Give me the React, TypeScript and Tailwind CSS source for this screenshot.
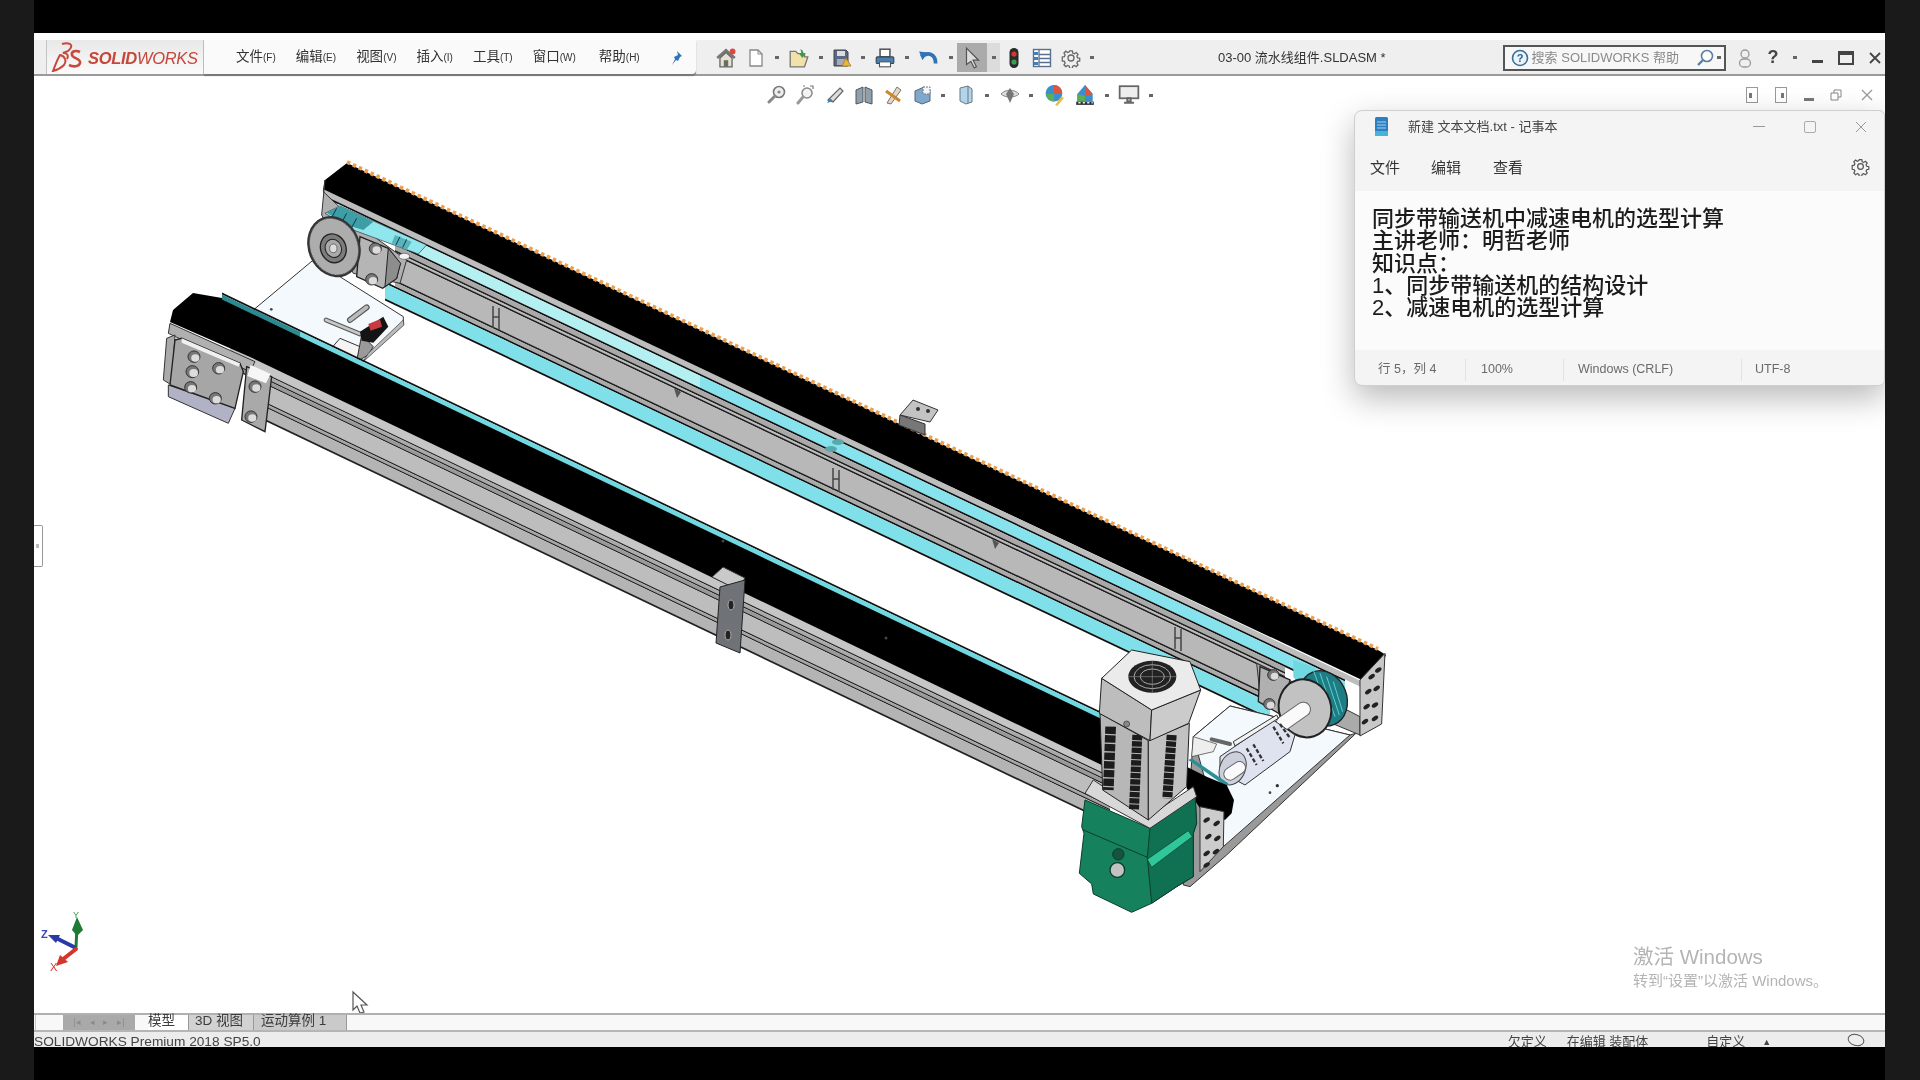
import type { ReactNode } from 'react';

// slanted strip running along the conveyor: y values are taken at refX
const band = (x0: number, x1: number, top: number, bot: number, refX: number, slope = 0.474) => {
  const at = (x: number, y: number) => `${x},${(y + (x - refX) * slope).toFixed(1)}`;
  return `${at(x0, top)} ${at(x1, top)} ${at(x1, bot)} ${at(x0, bot)}`;
};

const Far = ({ x0, x1, top, bot, fill }: { x0: number; x1: number; top: number; bot: number; fill: string }) => (
  <polygon points={band(x0, x1, top, bot, 880)} fill={fill} />
);

const Near = ({ x0 = 262, x1 = 1110, top, bot, fill }: { x0?: number; x1?: number; top: number; bot: number; fill: string }) => (
  <polygon points={band(x0, x1, top, bot, 680, 0.477)} fill={fill} />
);

function Hole({ x, y, r = 18 }: { x: number; y: number; r?: number }) {
  return (
    <g>
      <ellipse cx={x} cy={y} rx={r} ry={r * 0.95} fill="#777" stroke="#333" strokeWidth="3" />
      <ellipse cx={x + 4} cy={y + 4} rx={r * 0.68} ry={r * 0.62} fill="#dcdcdc" />
    </g>
  );
}

function Speckle({ pts }: { pts: number[][] }) {
  return (
    <g fill="#222">
      {pts.map(([x, y], i) => (
        <ellipse key={i} cx={x} cy={y} rx="11" ry="6" transform={`rotate(-35 ${x} ${y})`} />
      ))}
    </g>
  );
}

function Conveyor() {
  return (
    <svg className="absolute inset-0 h-full w-full" viewBox="34 76 1851 937">
      {/* far belt */}
      <polygon points="347,163 1378,650 1386,655 1380,668 1362,680 323,192 325,180" fill="#000" />
      <line x1="347" y1="162" x2="1378" y2="649" stroke="#e9a050" strokeWidth="4" strokeDasharray="3.5 3" />
      <Far x0={323} x1={1362} top={453} bot={459} fill="#bdbdbd" />
      <Far x0={323} x1={1345} top={459} bot={461} fill="#111" />
      <Far x0={338} x1={700} top={461} bot={473} fill="#b4f0f2" />
      <Far x0={700} x1={1345} top={461} bot={473} fill="#86e2ec" />
      <Far x0={338} x1={1345} top={473} bot={475} fill="#111" />
      <Far x0={395} x1={1285} top={475} bot={480} fill="#a9a9a9" />
      <Far x0={395} x1={1285} top={480} bot={482} fill="#222" />
      <Far x0={395} x1={1285} top={482} bot={484} fill="#bbb" />
      <Far x0={395} x1={1285} top={484} bot={486} fill="#222" />
      <Far x0={395} x1={1285} top={486} bot={510} fill="#b8b8b8" />
      <Far x0={395} x1={1285} top={510} bot={512} fill="#222" />
      <Far x0={395} x1={1285} top={512} bot={516} fill="#aaa" />
      <Far x0={385} x1={1285} top={516} bot={518} fill="#111" />
      <Far x0={385} x1={1270} top={518} bot={533} fill="#7fe0ea" />
      <Far x0={385} x1={1270} top={533} bot={535} fill="#111" />
      {/* rail notches */}
      {[
        [496, 316],
        [836, 478],
        [1178, 637],
      ].map(([x, y]) => (
        <g key={x} stroke="#444" strokeWidth="1.5" fill="none">
          <path d={`M${x - 3} ${y - 10}v22M${x + 3} ${y - 8}v22M${x - 3} ${y + 1}h6`} />
        </g>
      ))}
      {[
        [677, 392],
        [995, 543],
      ].map(([x, y]) => (
        <polygon key={x} points={`${x - 3},${y - 4} ${x + 4},${y} ${x},${y + 6}`} fill="#555" />
      ))}
      <ellipse cx="831" cy="449" rx="6" ry="3" fill="#5aa8ae" />
      <ellipse cx="838" cy="442" rx="6" ry="3" fill="#5aa8ae" />
      {/* upper bracket */}
      <polygon points="900,415 913,400 938,410 930,422" fill="#c3c3c3" stroke="#333" />
      <polygon points="900,415 899,425 925,435 925,424" fill="#777" stroke="#333" />
      <ellipse cx="918" cy="409" rx="2" ry="2" fill="#333" />
      <ellipse cx="928" cy="411" rx="2" ry="2" fill="#333" />

      {/* left end, coordinates as read off the crop */}
      <g transform="translate(140 150) scale(0.3333)">
        <polygon points="520,330 790,500 790,525 660,640 340,480" fill="#f4f9fd" stroke="#333" strokeWidth="3" />
        <circle cx="394" cy="478" r="4" fill="#444" />
        <line x1="630" y1="510" x2="680" y2="472" stroke="#555" strokeWidth="18" strokeLinecap="round" />
        <line x1="630" y1="510" x2="680" y2="472" stroke="#bbb" strokeWidth="11" strokeLinecap="round" />
        <line x1="558" y1="510" x2="660" y2="552" stroke="#555" strokeWidth="14" strokeLinecap="round" />
        <line x1="558" y1="510" x2="660" y2="552" stroke="#c8c8c8" strokeWidth="8" strokeLinecap="round" />
        <polygon points="570,600 600,565 660,590 650,635" fill="#f4f4f4" stroke="#333" strokeWidth="3" />
        <polygon points="650,635 665,555 700,590 685,615" fill="#9a9a9a" stroke="#333" strokeWidth="3" />
        <polygon points="685,610 790,510 792,525 670,635" fill="#bbb" stroke="#333" strokeWidth="2" />
        <polygon points="660,545 730,500 745,530 700,578 665,572" fill="#141414" />
        <polygon points="685,522 720,508 726,530 692,542" fill="#c83a42" />
        {/* far pulley */}
        <polygon points="550,125 555,90 545,195 640,370 780,400 800,330 660,230" fill="#b0b0b0" stroke="#333" strokeWidth="3" />
        <polygon points="555,190 600,168 860,285 835,312 640,240" fill="#8fe6ec" stroke="#333" strokeWidth="2" />
        <polygon points="560,188 600,168 700,215 670,240 620,225" fill="#3d9ea6" />
        <polygon points="765,255 815,275 800,300 755,280" fill="#58b3bb" />
        <path d="M590 175l-15 28M620 190l-15 28M650 205l-15 28M780 260l-12 25M800 268l-12 25" stroke="#135" strokeWidth="3" />
        <polygon points="660,260 745,295 780,340 770,385 728,415 650,380" fill="#b5b5b5" stroke="#222" strokeWidth="4" />
        <polygon points="745,295 782,340 770,385 735,410" fill="#8d8d8d" stroke="#222" strokeWidth="3" />
        <Hole x={706} y={296} />
        <Hole x={695} y={388} />
        <ellipse cx="793" cy="319" rx="16" ry="9" fill="#f4f4f4" stroke="#555" strokeWidth="2" />
        <ellipse cx="582" cy="290" rx="78" ry="94" transform="rotate(-22 582 290)" fill="#333" />
        <ellipse cx="582" cy="290" rx="71" ry="87" transform="rotate(-22 582 290)" fill="#adadad" stroke="#555" strokeWidth="3" strokeDasharray="4 3" />
        <ellipse cx="580" cy="295" rx="38" ry="44" transform="rotate(-22 580 295)" fill="#7c7c7c" stroke="#222" strokeWidth="4" />
        <ellipse cx="580" cy="295" rx="24" ry="28" transform="rotate(-22 580 295)" fill="#aaa" stroke="#222" strokeWidth="3" />
        <ellipse cx="580" cy="295" rx="11" ry="13" fill="#ddd" stroke="#444" strokeWidth="2" />
      </g>

      {/* near rail */}
      <Near x0={230} top={562} bot={571} fill="#c6c6c6" />
      <Near x0={230} top={571} bot={572.5} fill="#222" />
      <Near x0={240} top={572.5} bot={576} fill="#aaa" />
      <Near x0={240} top={576} bot={577.5} fill="#222" />
      <Near x0={240} top={577.5} bot={581} fill="#999" />
      <Near x0={240} top={581} bot={582.5} fill="#222" />
      <Near top={582.5} bot={600} fill="#bdbdbd" />
      <Near top={600} bot={601.5} fill="#222" />
      <Near top={601.5} bot={604} fill="#a5a5a5" />
      <Near top={604} bot={605.5} fill="#222" />
      <Near top={605.5} bot={617} fill="#b4b4b4" />
      <Near top={617} bot={619} fill="#222" />
      {/* near belt */}
      <polygon points="193,293 222,298 1110,721 1110,769 680,562 250,357 170,322 173,310" fill="#000" />
      <Near x0={222} top={511} bot={513} fill="#111" />
      <Near x0={222} x1={300} top={513} bot={518} fill="#2b8a90" />
      <Near x0={300} top={513} bot={518} fill="#6fd8e0" />
      <ellipse cx="723" cy="541" rx="1.5" ry="1.5" fill="#444" />
      <ellipse cx="886" cy="638" rx="1.5" ry="1.5" fill="#444" />
      {/* bracket on the near rail */}
      <polygon points="712,577 723,567 745,578 738,590" fill="#c9c9c9" stroke="#333" />
      <polygon points="720,587 745,580 740,653 716,643" fill="#6f7378" stroke="#222" />
      <ellipse cx="731" cy="605" rx="3" ry="5" fill="#222" stroke="#aaa" />
      <ellipse cx="728" cy="635" rx="3" ry="5" fill="#222" stroke="#aaa" />

      {/* left end block of the near rail */}
      <g transform="translate(140 150) scale(0.3333)">
        <polygon points="90,520 345,635 330,665 85,550" fill="#b0b0b0" stroke="#333" strokeWidth="3" />
        <polygon points="80,565 105,555 95,705 70,690" fill="#aaa" stroke="#333" strokeWidth="3" />
        <polygon points="85,705 285,775 265,820 85,740" fill="#b2b2c6" stroke="#333" strokeWidth="3" />
        <polygon points="105,570 125,565 300,640 310,665 285,775 90,705" fill="#a6a6a6" stroke="#222" strokeWidth="4" />
        <polygon points="125,565 300,640 296,650 125,578" fill="#f0f0f0" />
        <Hole x={162} y={620} />
        <Hole x={157} y={665} r={19} />
        <Hole x={236} y={655} />
        <Hole x={152} y={712} />
        <Hole x={226} y={745} />
        <polygon points="320,650 395,680 375,845 305,810" fill="#a9a9a9" stroke="#222" strokeWidth="4" />
        <polygon points="332,645 392,672 378,700 322,678" fill="#f6f6f6" />
        <Hole x={345} y={710} />
        <Hole x={333} y={800} />
      </g>

      {/* right end with the motor */}
      <g transform="translate(1060 620) scale(0.3333)">
        <polygon points="400,350 510,258 870,345 888,340 500,705 390,800 370,795" fill="#9a9a9a" stroke="#333" strokeWidth="3" />
        <polygon points="400,350 510,258 870,345 490,680" fill="#f4f9fd" stroke="#333" strokeWidth="3" />
        <circle cx="652" cy="497" r="5" fill="#333" />
        <circle cx="630" cy="518" r="4" fill="#444" />
        <polygon points="590,130 900,290 900,345 835,318 600,220" fill="#aaa" stroke="#333" strokeWidth="3" />
        <polygon points="900,180 975,100 965,312 900,348" fill="#c8c8c8" stroke="#333" strokeWidth="3" />
        <Speckle pts={[[935, 170], [955, 150], [925, 215], [950, 205], [920, 260], [945, 255], [915, 305], [945, 295]]} />
        <polygon points="700,120 760,140 840,250 800,300 700,170" fill="#6fd8e0" />
        <ellipse cx="790" cy="235" rx="70" ry="85" transform="rotate(-22 790 235)" fill="#1c7d85" stroke="#222" strokeWidth="4" />
        <path d="M760 150l50 140M780 160l45 130M800 170l38 115M820 185l28 90" stroke="#6cc" strokeWidth="3" />
        <polygon points="600,140 690,180 665,285 595,245" fill="#b0b0b0" stroke="#222" strokeWidth="4" />
        <Hole x={640} y={165} r={17} />
        <Hole x={628} y={252} r={17} />
        <ellipse cx="735" cy="265" rx="78" ry="88" transform="rotate(-18 735 265)" fill="#c2c2c2" stroke="#222" strokeWidth="6" />
        <line x1="670" y1="310" x2="730" y2="268" stroke="#666" strokeWidth="46" strokeLinecap="round" />
        <line x1="670" y1="310" x2="730" y2="268" stroke="#fafafa" strokeWidth="40" strokeLinecap="round" />
        <polygon points="480,410 640,300 705,345 690,395 555,495 480,455" fill="#dfe3ef" stroke="#333" strokeWidth="3" />
        <polygon points="520,365 650,285 655,295 525,378" fill="#f2f2f2" stroke="#333" strokeWidth="3" />
        <ellipse cx="518" cy="445" rx="38" ry="52" transform="rotate(25 518 445)" fill="#ccd0dd" stroke="#444" strokeWidth="3" />
        <line x1="510" y1="462" x2="538" y2="443" stroke="#666" strokeWidth="40" strokeLinecap="round" />
        <line x1="510" y1="462" x2="538" y2="443" stroke="#fafafa" strokeWidth="34" strokeLinecap="round" />
        <path d="M560 385l30 50M580 373l30 50M640 320l30 50M660 312l30 42" stroke="#333" strokeWidth="7" strokeDasharray="12 6" />
        <polygon points="400,350 470,372 460,395 395,410" fill="#eee" stroke="#333" strokeWidth="2" />
        <line x1="455" y1="358" x2="510" y2="372" stroke="#666" strokeWidth="12" strokeLinecap="round" />
        <polygon points="385,420 395,415 505,490 500,500" fill="#2e8e96" />
        <polygon points="380,440 440,470 500,495 522,540 515,580 495,600 420,565 380,505" fill="#000" />
        <polygon points="420,560 492,575 490,680 420,755" fill="#ccc" stroke="#333" strokeWidth="3" />
        <Speckle pts={[[440, 600], [470, 610], [445, 650], [472, 655], [440, 700], [468, 695], [440, 735]]} />

        <polygon points="65,620 75,540 270,625 405,520 410,610 400,640 400,770 350,800 275,850 215,877 100,822 95,792 58,760 72,640" fill="#15825d" stroke="#0c3c2c" strokeWidth="3" />
        <polygon points="270,625 405,520 410,610 400,640 400,770 350,800 275,850 262,712" fill="#107052" stroke="#0c3c2c" strokeWidth="3" />
        <path d="M70 630L262 712" stroke="#0c3c2c" strokeWidth="3" />
        <polygon points="262,718 385,632 397,650 275,742" fill="#2fc79a" stroke="#0c3c2c" strokeWidth="2" />
        <circle cx="175" cy="703" r="17" fill="#15543f" stroke="#0c3c2c" strokeWidth="3" />
        <circle cx="172" cy="750" r="22" fill="#c2c2c2" stroke="#0c3c2c" strokeWidth="4" />

        <polygon points="75,520 100,480 265,590 400,500 410,530 270,625" fill="#d8d8d8" stroke="#333" strokeWidth="3" />
        <polygon points="120,280 128,510 265,600 265,362" fill="#b7b7b7" stroke="#222" strokeWidth="3" />
        <polygon points="265,362 388,310 380,500 265,600" fill="#c2c2c2" stroke="#222" strokeWidth="3" />
        <line x1="152" y1="320" x2="145" y2="510" stroke="#1c1c1c" strokeWidth="32" strokeDasharray="22 4" />
        <line x1="232" y1="345" x2="222" y2="568" stroke="#1c1c1c" strokeWidth="30" strokeDasharray="16 3" />
        <line x1="335" y1="345" x2="322" y2="535" stroke="#1c1c1c" strokeWidth="30" strokeDasharray="16 3" />
        <polygon points="125,175 118,280 270,362 275,270" fill="#bdbdbd" stroke="#222" strokeWidth="3" />
        <polygon points="275,270 270,362 386,310 422,210" fill="#cbcbcb" stroke="#222" strokeWidth="3" />
        <polygon points="125,175 215,90 390,125 422,210 275,270" fill="#ebebeb" stroke="#222" strokeWidth="3" />
        <ellipse cx="277" cy="170" rx="72" ry="48" fill="#222" />
        <ellipse cx="277" cy="170" rx="55" ry="36" fill="none" stroke="#aaa" strokeWidth="3" />
        <ellipse cx="277" cy="170" rx="36" ry="23" fill="none" stroke="#aaa" strokeWidth="3" />
        <path d="M277 122v96M205 170h144" stroke="#888" strokeWidth="2" />
        <circle cx="200" cy="312" r="9" fill="#888" stroke="#333" strokeWidth="2" />
      </g>

      {/* axis triad */}
      <g strokeLinecap="round">
        <line x1="76" y1="947" x2="77" y2="926" stroke="#1f7a35" strokeWidth="3" />
        <polygon points="77,917 83,930 77,936 72,930" fill="#1f7a35" />
        <line x1="74" y1="947" x2="56" y2="938" stroke="#2a3aa8" strokeWidth="4" />
        <polygon points="48,935 60,935 56,943" fill="#2a3aa8" />
        <line x1="76" y1="949" x2="62" y2="960" stroke="#d8352a" strokeWidth="4" />
        <polygon points="56,966 60,955 68,962" fill="#d8352a" />
      </g>
      <text x="41" y="938" fontSize="11" fontWeight="700" fill="#3b46b8" fontFamily="Liberation Sans">Z</text>
      <text x="50" y="971" fontSize="11" fill="#d8352a" fontFamily="Liberation Sans">X</text>
      <text x="73" y="918" fontSize="9" fill="#3a9a52" fontFamily="Liberation Sans">Y</text>
      {/* mouse pointer */}
      <polygon points="353,992 367,1005 361,1005 364,1012 360,1013 357,1006 353,1010" fill="#fff" stroke="#555" strokeWidth="1.2" />
    </svg>
  );
}

const Caret = () => <span className="inline-block h-[3px] w-[4px] shrink-0 bg-[#666] align-middle" />;

function Ico({ children, w = 20, h = 20 }: { children: ReactNode; w?: number; h?: number }) {
  return (
    <svg width={w} height={h} viewBox="0 0 20 20" className="shrink-0">
      {children}
    </svg>
  );
}

const Home = () => (
  <Ico w={22} h={22}>
    <path d="M2 10l8-7 8 7" fill="none" stroke="#777" strokeWidth="2.4" />
    <path d="M4.5 10v8h11v-8L10 5z" fill="#e8e2d0" stroke="#666" strokeWidth="1.2" />
    <rect x="8" y="12" width="4" height="6" fill="#6b6b6b" />
    <circle cx="16" cy="4" r="2.6" fill="#e0483c" />
  </Ico>
);
const Doc = () => (
  <Ico w={20} h={22}>
    <path d="M4 2h8l4 4v12H4z" fill="#fff" stroke="#888" strokeWidth="1.3" />
    <path d="M12 2v4h4" fill="none" stroke="#888" />
  </Ico>
);
const Folder = () => (
  <Ico w={22} h={22}>
    <path d="M2 4h5l2 2h6v3h3l-3 9H2z" fill="#f0e2a8" stroke="#777" strokeWidth="1.2" />
    <path d="M11 2c2 0 3 2 3 4h2l-3 4-3-4h2c0-1 0-3-1-4z" fill="#3b9a4a" />
  </Ico>
);
const Save = () => (
  <Ico w={20} h={22}>
    <path d="M2 2h12l2 2v14H2z" fill="#5a6a86" stroke="#444" />
    <rect x="5" y="3" width="8" height="5" fill="#ddd" />
    <rect x="5" y="11" width="8" height="6" fill="#aab" />
    <path d="M14 10l5 8h-9z" fill="#e8b83a" stroke="#a07a20" strokeWidth="0.8" />
  </Ico>
);
const Print = () => (
  <Ico w={22} h={22}>
    <rect x="5.5" y="2" width="9" height="7" fill="#fff" stroke="#555" strokeWidth="1.4" />
    <rect x="2" y="9" width="16" height="6" rx="1" fill="#4a7fb0" stroke="#345" />
    <rect x="5" y="13.5" width="10" height="4.5" fill="#fff" stroke="#555" />
  </Ico>
);
const Undo = () => (
  <Ico w={22} h={22}>
    <path d="M3 9c6-5 13-3 13 6" fill="none" stroke="#2f74b8" strokeWidth="3.4" />
    <path d="M1 4l8 1-5 7z" fill="#2f74b8" />
  </Ico>
);
const Arrow = () => (
  <Ico w={22} h={24}>
    <path d="M5 1v15l4-3 3 6 2-1-3-6h5z" fill="#ddd" stroke="#555" strokeWidth="1.1" />
  </Ico>
);
const Light = () => (
  <svg width="10" height="22" viewBox="0 0 10 22" className="shrink-0">
    <rect x="0.5" y="1" width="9" height="20" rx="4.5" fill="#2a2a2a" />
    <circle cx="5" cy="7" r="2.6" fill="#d03a30" />
    <circle cx="5" cy="15" r="2.6" fill="#3aa050" />
  </svg>
);
const List = () => (
  <Ico w={20} h={20}>
    <rect x="1.5" y="1.5" width="17" height="17" fill="#fff" stroke="#5a7090" strokeWidth="1.4" />
    <path d="M7 1.5v17M7 6.5h11M7 10.5h11M7 14.5h11" stroke="#5a7090" strokeWidth="1.3" />
    <path d="M2 4h4v3H2zM2 9h4v3H2zM2 14h4v3H2z" fill="#3f80b8" />
  </Ico>
);
const Gear = ({ c = '#666', s = 20 }: { c?: string; s?: number }) => (
  <Ico w={s} h={s}>
    <path
      d="M8.4 1.5h3.2l.5 2.6 1.9.8 2.2-1.5 2.2 2.3-1.4 2.1.8 2 2.6.5v3.2l-2.6.5-.8 1.9 1.4 2.2-2.2 2.2-2.2-1.4-1.9.8-.5 2.6H8.4l-.5-2.6-1.9-.8-2.2 1.4-2.2-2.2 1.4-2.2-.8-1.9-2.6-.5V8.8l2.6-.5.8-2-1.4-2.1 2.2-2.3 2.2 1.5 1.9-.8z"
      transform="translate(1.6 1.6) scale(0.84)"
      fill="none"
      stroke={c}
      strokeWidth="1.5"
    />
    <circle cx="10" cy="10" r="3" fill="none" stroke={c} strokeWidth="1.3" />
  </Ico>
);

const Zoom = () => (
  <Ico>
    <circle cx="12" cy="7" r="5.5" fill="#eee" stroke="#777" strokeWidth="1.6" />
    <circle cx="12" cy="7" r="1.6" fill="#888" />
    <path d="M8 11l-6 6" stroke="#888" strokeWidth="3" strokeLinecap="round" />
  </Ico>
);
const ZoomBox = () => (
  <Ico>
    <circle cx="11" cy="8" r="5" fill="#f3f3f3" stroke="#888" strokeWidth="1.5" />
    <path d="M7 12l-5 6" stroke="#999" strokeWidth="3" strokeLinecap="round" />
    <path d="M7 1h2M14 1h3v3" stroke="#777" strokeWidth="1.2" fill="none" />
  </Ico>
);
const Pencil = () => (
  <Ico>
    <path d="M3 15L15 3l3 3-10 11z" fill="#ddd" stroke="#666" strokeWidth="1.2" />
    <path d="M2 18l6-2-3-3z" fill="#4a7fb0" />
  </Ico>
);
const Books = () => (
  <Ico>
    <path d="M2 5l7-3v15l-7 2zM11 2l7 3v14l-7-2z" fill="#8ea0ad" stroke="#555" strokeWidth="1" />
  </Ico>
);
const Section = () => (
  <Ico>
    <path d="M4 18L14 2l4 3L8 19z" fill="#e6d6c0" stroke="#777" />
    <path d="M3 6l14 10" stroke="#c8862e" strokeWidth="3" />
  </Ico>
);
const Cube = () => (
  <Ico>
    <path d="M3 6l9-4 6 3v11l-8 3-7-3z" fill="#7ea8cc" stroke="#567" />
    <path d="M11 2h7v7h-7z" fill="#f4f4f4" stroke="#777" strokeDasharray="2 1" />
  </Ico>
);
const Cyl = () => (
  <Ico>
    <path d="M4 3l8-2 4 3v13l-6 2-6-3z" fill="#b4d4e8" stroke="#678" />
    <path d="M12 1v17" stroke="#678" />
  </Ico>
);
const Eye = () => (
  <Ico>
    <path d="M1 9c4-5 14-5 18 0-4 4-14 4-18 0z" fill="#ddd" stroke="#888" />
    <path d="M10 3l4 6-4 9-4-9z" fill="#777" />
  </Ico>
);
const Ball = () => (
  <Ico w={22} h={22}>
    <path d="M10 1a7.5 7.5 0 1 1-.1 0z" fill="#3b8fd0" />
    <path d="M10 1a7.5 7.5 0 0 1 7.5 7.5H10z" fill="#e0553a" />
    <path d="M3 9h7v7a7.5 7.5 0 0 1-7-7z" fill="#58b050" />
    <path d="M11 19l6-8 2 2-6 7z" fill="#e8c040" />
  </Ico>
);
const Scene = () => (
  <Ico w={22} h={22}>
    <path d="M10 1l7 8v7H3V9z" fill="#3b8fd0" />
    <path d="M10 1l7 8-7 2z" fill="#e0553a" />
    <path d="M3 9l7 2v5H3z" fill="#58b050" />
    <path d="M2 16h16v3H2z" fill="#333" />
    <path d="M4 17h2M8 17h2M12 17h2M16 17h1" stroke="#eee" strokeWidth="1.4" />
  </Ico>
);
const Screen = () => (
  <Ico w={22} h={22}>
    <rect x="1.5" y="2" width="17" height="11" fill="#eee" stroke="#666" strokeWidth="1.6" />
    <path d="M8.5 13h3v3h-3zM5.5 17h9" stroke="#666" strokeWidth="1.8" fill="none" />
  </Ico>
);

const menus = [
  ['文件', '(F)'],
  ['编辑', '(E)'],
  ['视图', '(V)'],
  ['插入', '(I)'],
  ['工具', '(T)'],
  ['窗口', '(W)'],
  ['帮助', '(H)'],
];

function TopBar() {
  return (
    <div className="flex h-[43px] shrink-0 items-stretch border-b-2 border-[#9a9a9a] bg-[#efefef] pt-[7px] [background-image:linear-gradient(#fdfdfd_0,#fdfdfd_7px,#efefef_7px)]">
      <div className="ml-[12px] flex w-[158px] items-center gap-[3px] border-x border-[#c4c4c4] bg-gradient-to-b from-[#e8e8e8] to-[#fbfbfb] pl-[4px]">
        <svg width="34" height="30" viewBox="0 0 34 30" className="shrink-0">
          <path d="M11 2c6-2 12 0 8 5-2 3-5 3-7 4 4 0 6 2 4 6" fill="none" stroke="#c8493c" strokeWidth="2" />
          <path d="M9 13c5 1 7 6 4 10-3 3-7 5-11 6 2-5 4-11 7-16z" fill="none" stroke="#c8493c" strokeWidth="2" />
          <path d="M29 10c-4-2-9-1-8 3 1 4 9 3 8 8-1 4-7 4-11 2" fill="none" stroke="#c8493c" strokeWidth="2.6" />
        </svg>
        <span className="mt-[3px] text-[16.5px] leading-none tracking-[-0.3px] whitespace-nowrap text-[#c4473a] italic">
          <b className="font-bold">SOLID</b>WORKS
        </span>
      </div>
      <div className="flex w-[492px] items-center rounded-br-sm bg-[#fafafa] pt-[1px] pl-[32px] shadow-[0_2px_1px_#777]">
        <div className="flex gap-[20px]">
          {menus.map(([a, b]) => (
            <span key={a} className="whitespace-nowrap text-[13.5px] text-[#333] last:ml-[3px]">
              {a}
              <span className="text-[10px]">{b}</span>
            </span>
          ))}
        </div>
        <svg width="14" height="16" viewBox="0 0 14 16" className="ml-[29px]">
          <path d="M8 1l5 5-2 1-2 4-2-1-4 5 3-6-1-2 4-2z" fill="#2f74b8" />
        </svg>
      </div>
      <div className="flex flex-1 items-center pt-[1px] pl-[19px]">
        <div className="flex items-center gap-[9px]">
          <Home />
          <Doc />
          <Caret />
          <Folder />
          <Caret />
          <Save />
          <Caret />
          <Print />
          <Caret />
          <Undo />
          <Caret />
          <div className="-ml-[5px] flex h-[29px] w-[43px] items-center bg-[#ababab] pl-[4px]">
            <Arrow />
            <div className="ml-[4px] flex h-full flex-1 items-center justify-center bg-[#dcdcdc]">
              <Caret />
            </div>
          </div>
          <Light />
          <span className="ml-[4px] flex">
            <List />
          </span>
          <Gear />
          <Caret />
        </div>
        <span className="ml-[124px] whitespace-nowrap text-[13px] text-[#333]">03-00 流水线组件.SLDASM *</span>
        <div className="ml-[117px] flex h-[26px] w-[223px] shrink-0 items-center border-2 border-[#555] bg-[#f7f7f7] pl-[6px]">
          <svg width="18" height="18" viewBox="0 0 18 18" className="shrink-0">
            <circle cx="9" cy="9" r="7.5" fill="#eaf3fa" stroke="#3a6f98" strokeWidth="1.6" />
            <text x="9" y="13" textAnchor="middle" fontSize="11" fontWeight="700" fill="#2a5f88" fontFamily="Liberation Sans">?</text>
          </svg>
          <span className="ml-[3px] whitespace-nowrap text-[13px] text-[#8a8a8a]">搜索 SOLIDWORKS 帮助</span>
          <svg width="20" height="20" viewBox="0 0 20 20" className="ml-auto shrink-0">
            <circle cx="12" cy="8" r="5.5" fill="#fff" stroke="#5a7ea0" strokeWidth="1.6" />
            <path d="M8 12l-5 5" stroke="#5a7ea0" strokeWidth="2.4" />
          </svg>
          <span className="mr-[3px] ml-[2px] flex">
            <Caret />
          </span>
        </div>
        <svg width="16" height="20" viewBox="0 0 16 20" className="ml-[11px] shrink-0">
          <circle cx="8" cy="6" r="4" fill="none" stroke="#999" strokeWidth="1.3" />
          <rect x="2.5" y="11" width="11" height="8" rx="4" fill="none" stroke="#999" strokeWidth="1.3" />
        </svg>
        <span className="ml-[15px] text-[18px] font-bold text-[#444]">?</span>
        <span className="ml-[14px] flex">
          <Caret />
        </span>
        <span className="mt-[8px] ml-[15px] h-[3px] w-[11px] bg-[#444]" />
        <span className="ml-[15px] h-[14px] w-[16px] border-2 border-t-[4px] border-[#444]" />
        <svg width="14" height="14" viewBox="0 0 14 14" className="ml-[14px]">
          <path d="M2 2l10 10M12 2L2 12" stroke="#444" strokeWidth="1.8" />
        </svg>
      </div>
    </div>
  );
}

function ViewBar() {
  return (
    <div className="absolute top-[5px] right-0 left-0 flex h-[28px] items-center">
      <div className="ml-[733px] flex items-center gap-[9px]">
        <Zoom />
        <ZoomBox />
        <Pencil />
        <Books />
        <Section />
        <Cube />
        <Caret />
        <span className="ml-[2px] flex">
          <Cyl />
        </span>
        <Caret />
        <span className="ml-[2px] flex">
          <Eye />
        </span>
        <Caret />
        <span className="ml-[1px] flex">
          <Ball />
        </span>
        <Scene />
        <Caret />
        <Screen />
        <Caret />
      </div>
      <div className="ml-[593px] flex items-center">
        <span className="flex h-[16px] w-[12px] items-center justify-start border border-[#999] pl-[2px]">
          <span className="h-[5px] w-[3px] bg-[#777]" />
        </span>
        <span className="ml-[17px] flex h-[16px] w-[12px] items-center justify-end border border-[#999] pr-[2px]">
          <span className="h-[5px] w-[3px] bg-[#777]" />
        </span>
        <span className="mt-[9px] ml-[17px] h-[3px] w-[10px] bg-[#777]" />
        <svg width="12" height="12" viewBox="0 0 12 12" className="ml-[16px]">
          <path d="M1 4h7v7H1zM4 4V1h7v7H8" fill="none" stroke="#888" />
        </svg>
        <svg width="12" height="12" viewBox="0 0 12 12" className="ml-[19px]">
          <path d="M1 1l10 10M11 1L1 11" stroke="#999" strokeWidth="1.3" />
        </svg>
      </div>
    </div>
  );
}

function Notepad() {
  return (
    <div className="absolute top-[34px] right-0 flex h-[276px] w-[531px] flex-col overflow-hidden rounded-l-lg rounded-r-md border border-[#cfcfcf] bg-[#f4f4f4] shadow-[0_12px_32px_rgba(0,0,0,0.28)]">
      <div className="flex h-[31px] shrink-0 items-center pl-[19px]">
        <svg width="15" height="19" viewBox="0 0 15 19" className="shrink-0">
          <rect x="1" y="0" width="13" height="19" rx="1.5" fill="#2d7fc0" />
          <rect x="1" y="14" width="13" height="5" fill="#46b4d8" />
          <path d="M3 5h9M3 8h9M3 11h9" stroke="#a5d4ee" strokeWidth="1" />
        </svg>
        <span className="ml-[19px] whitespace-nowrap text-[13px] text-[#444]">新建 文本文档.txt - 记事本</span>
        <span className="ml-[195px] h-px w-[12px] bg-[#999]" />
        <span className="ml-[39px] h-[12px] w-[12px] rounded-[2px] border border-[#aaa]" />
        <svg width="12" height="12" viewBox="0 0 12 12" className="ml-[39px]">
          <path d="M1 1l10 10M11 1L1 11" stroke="#999" strokeWidth="1" />
        </svg>
      </div>
      <div className="flex h-[49px] shrink-0 items-center pt-[4px] pl-[15px] text-[15px] text-[#333]">
        <span>文件</span>
        <span className="ml-[31px]">编辑</span>
        <span className="ml-[32px]">查看</span>
        <span className="-mt-[4px] mr-[14px] ml-auto flex">
          <Gear c="#555" s={19} />
        </span>
      </div>
      <div className="flex-1 bg-[#fbfbfb] pt-[17px] pl-[17px] text-[22px] leading-[22.3px] font-medium text-[#1c1c1c]">
        <p>同步带输送机中减速电机的选型计算</p>
        <p>主讲老师：明哲老师</p>
        <p>知识点：</p>
        <p>1、同步带输送机的结构设计</p>
        <p>2、减速电机的选型计算</p>
      </div>
      <div className="flex h-[35px] shrink-0 items-center pt-[4px] text-[12.5px] text-[#6a6a6a]">
        <span className="w-[110px] pl-[23px]">行 5，列 4</span>
        <span className="h-[22px] w-px bg-[#e2e2e2]" />
        <span className="w-[97px] pl-[15px]">100%</span>
        <span className="h-[22px] w-px bg-[#e2e2e2]" />
        <span className="w-[177px] pl-[14px]">Windows (CRLF)</span>
        <span className="h-[22px] w-px bg-[#e2e2e2]" />
        <span className="pl-[13px]">UTF-8</span>
      </div>
    </div>
  );
}

function TabBar() {
  return (
    <div className="flex h-[17px] shrink-0 items-stretch border-t-2 border-[#b0b0b0] bg-[#f8f8f8] text-[13.5px] leading-[11px] text-[#3c3c3c]">
      <div className="w-[2px] border-r border-[#c8c8c8]" />
      <div className="ml-[27px] flex w-[72px] items-center justify-around bg-[#a9a9a9] px-[6px] text-[9px] text-[#8a8a8a]">
        <span>|◂</span>
        <span>◂</span>
        <span>▸</span>
        <span>▸|</span>
      </div>
      <span className="ml-[13px] w-[40px] bg-white">模型</span>
      <span className="w-[66px] border-x border-[#999] bg-[#d2d2d2] pl-[6px]">3D 视图</span>
      <span className="w-[93px] border-r border-[#999] bg-[#cacaca] pl-[7px]">运动算例 1</span>
    </div>
  );
}

function StatusBar() {
  return (
    <div className="flex h-[17px] shrink-0 overflow-hidden border-t-2 border-[#b5b5b5] bg-[#ececec] pt-[1px] text-[13.7px] leading-[18px] text-[#444]">
      <span className="whitespace-nowrap">SOLIDWORKS Premium 2018 SP5.0</span>
      <span className="ml-[1247px] text-[13px] whitespace-nowrap">欠定义</span>
      <span className="ml-[20px] text-[13px] whitespace-nowrap">在编辑 装配体</span>
      <span className="ml-[58px] text-[13px] whitespace-nowrap">自定义</span>
      <span className="ml-[17px] text-[9px]">▲</span>
      <svg width="18" height="14" viewBox="0 0 18 14" className="ml-[76px]">
        <ellipse cx="9" cy="7" rx="8" ry="5.5" fill="#eee" stroke="#555" transform="rotate(15 9 7)" />
      </svg>
    </div>
  );
}

export default function App() {
  return (
    <div className="flex h-[1080px] w-[1920px] overflow-hidden bg-[#1a1a1a] [font-family:'Liberation_Sans','Noto_Sans_CJK_SC',sans-serif]">
      <div className="w-[34px] shrink-0" />
      <div className="flex w-[1851px] shrink-0 flex-col bg-black py-[33px]">
        <div className="flex h-[1014px] flex-col overflow-hidden bg-white blur-[0.4px]">
          <TopBar />
          <div className="relative flex-1">
            <Conveyor />
            <ViewBar />
            <Notepad />
            <div className="absolute top-[449px] left-0 flex h-[42px] w-[9px] items-center rounded-r-[2px] border border-l-0 border-[#999] bg-white">
              <span className="ml-[2px] h-[4px] w-[3px] bg-[#bbb]" />
            </div>
            <div className="absolute right-[54px] bottom-[22px] w-[198px] text-[#b4b4b4]">
              <p className="text-[20.5px] leading-[28px]">激活 Windows</p>
              <p className="text-[15px] leading-[20px] whitespace-nowrap">转到“设置”以激活 Windows。</p>
            </div>
          </div>
          <TabBar />
          <StatusBar />
        </div>
      </div>
    </div>
  );
}
